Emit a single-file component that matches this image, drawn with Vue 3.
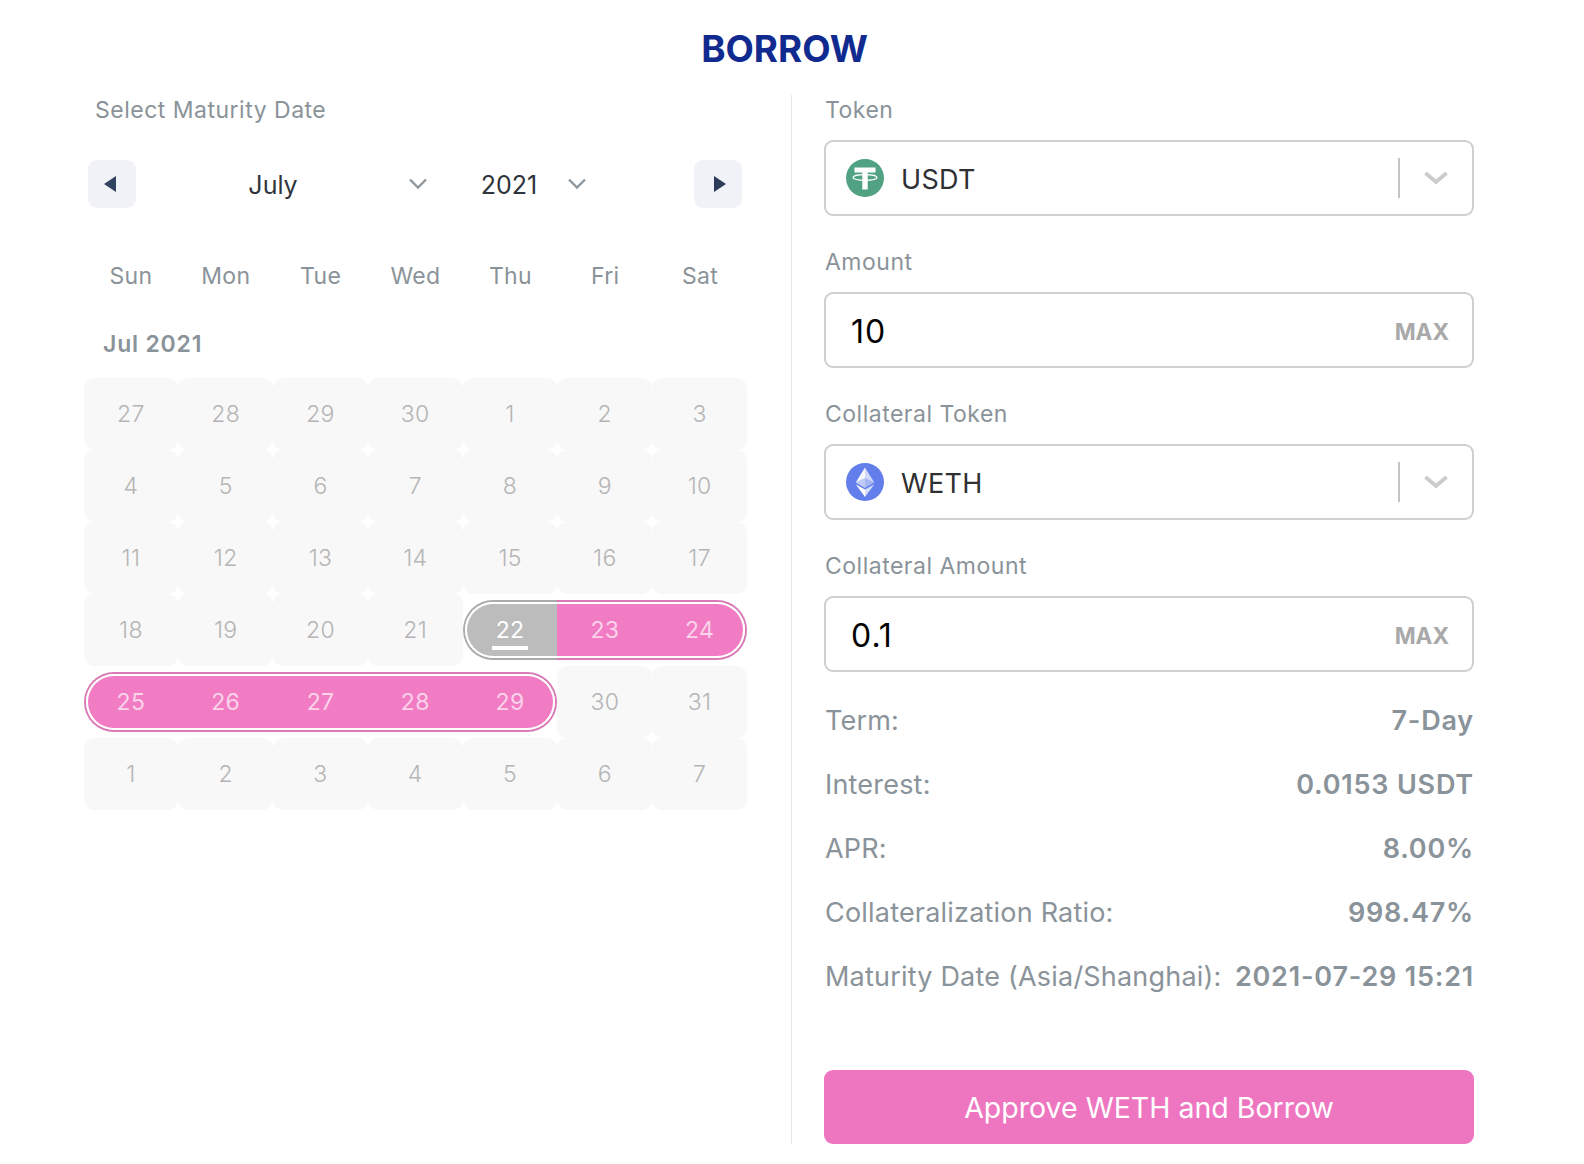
<script setup>
const days = ['Sun', 'Mon', 'Tue', 'Wed', 'Thu', 'Fri', 'Sat']
const nums = [27, 28, 29, 30, 1, 2, 3, 4, 5, 6, 7, 8, 9, 10, 11, 12, 13, 14, 15, 16, 17, 18, 19, 20, 21, 22, 23, 24, 25, 26, 27, 28, 29, 30, 31, 1, 2, 3, 4, 5, 6, 7]
const cells = nums.map((n, i) => ({
  n,
  sel: i >= 25 && i <= 32,
  today: i === 25,
  start: i === 25 || i === 28,
  end: i === 27 || i === 32
}))
const stats = [
  ['Term:', '7-Day'],
  ['Interest:', '0.0153 USDT'],
  ['APR:', '8.00%'],
  ['Collateralization Ratio:', '998.47%'],
  ['Maturity Date (Asia/Shanghai):', '2021-07-29 15:21']
]
</script>

<template>
  <div class="page">
    <h1 class="title">BORROW</h1>
    <main class="main">
      <section class="left">
        <div class="left-label">Select Maturity Date</div>
        <div class="nav">
          <button class="nav-btn"><svg class="tri-l" width="12" height="16" viewBox="0 0 12 16"><path d="M12 0v16L0 8z" fill="#2f4260" /></svg></button>
          <div class="month">
            <span class="month-text">July</span>
            <svg class="chev" width="24" height="14" viewBox="0 0 24 14"><path d="M4 2.5l8 8 8-8" fill="none" stroke="#8f979e" stroke-width="2.4" /></svg>
          </div>
          <div class="year">
            <span class="year-text">2021</span>
            <svg class="chev" width="24" height="14" viewBox="0 0 24 14"><path d="M4 2.5l8 8 8-8" fill="none" stroke="#8f979e" stroke-width="2.4" /></svg>
          </div>
          <button class="nav-btn next"><svg class="tri-r" width="12" height="16" viewBox="0 0 12 16"><path d="M0 0v16L12 8z" fill="#2b3a58" /></svg></button>
        </div>
        <div class="weekdays"><span v-for="d in days" :key="d">{{ d }}</span></div>
        <div class="caption">Jul 2021</div>
        <div class="grid">
          <div
            v-for="(c, i) in cells"
            :key="i"
            class="cell"
            :class="{ sel: c.sel, today: c.today, start: c.start, end: c.end }"
          >
            <span class="pill"><span class="fill"><span class="num">{{ c.n }}</span></span></span>
          </div>
        </div>
      </section>

      <section class="right">
        <div class="field">
          <label class="label">Token</label>
          <div class="box">
            <svg class="coin" width="38" height="38" viewBox="0 0 38 38">
              <circle cx="19" cy="19" r="19" fill="#50a283" />
              <path d="M8.5 8.5h21v5h-7.8v17h-5.4v-17H8.500z" fill="#fff" />
              <ellipse cx="19" cy="18.500" rx="12" ry="2.800" fill="none" stroke="#fff" stroke-width="1.200" />
            </svg>
            <span class="coin-name">USDT</span>
            <span class="sep"></span>
            <svg class="caret" width="26" height="16" viewBox="0 0 26 16"><path d="M2.500 3l10.500 9 10.500-9" fill="none" stroke="#cbcbcb" stroke-width="3.800" /></svg>
          </div>
        </div>
        <div class="field">
          <label class="label">Amount</label>
          <div class="box input"><span class="value">10</span><span class="max">MAX</span></div>
        </div>
        <div class="field">
          <label class="label">Collateral Token</label>
          <div class="box">
            <svg class="coin" width="38" height="38" viewBox="0 0 38 38">
              <circle cx="19" cy="19" r="19" fill="#627eea" />
              <path d="M19 4.500v10.700l-9.300 4.200z" fill="#fff" fill-opacity=".95" />
              <path d="M19 4.500l9.300 14.900-9.300-4.200z" fill="#fff" fill-opacity=".7" />
              <path d="M19 15.200l-9.300 4.200 9.300 5.500z" fill="#fff" fill-opacity=".6" />
              <path d="M19 15.200l9.300 4.200-9.300 5.500z" fill="#dfe4fb" fill-opacity=".55" />
              <path d="M9.700 21.200l9.300 12.800v-7.400z" fill="#fff" />
              <path d="M28.300 21.200L19 34v-7.400z" fill="#fff" fill-opacity=".75" />
            </svg>
            <span class="coin-name">WETH</span>
            <span class="sep"></span>
            <svg class="caret" width="26" height="16" viewBox="0 0 26 16"><path d="M2.500 3l10.500 9 10.500-9" fill="none" stroke="#cbcbcb" stroke-width="3.800" /></svg>
          </div>
        </div>
        <div class="field">
          <label class="label">Collateral Amount</label>
          <div class="box input"><span class="value">0.1</span><span class="max">MAX</span></div>
        </div>
        <div class="stats">
          <div v-for="s in stats" :key="s[0]" class="stat">
            <span class="stat-k">{{ s[0] }}</span>
            <span class="stat-v">{{ s[1] }}</span>
          </div>
        </div>
        <button class="cta">Approve WETH and Borrow</button>
      </section>
    </main>
  </div>
</template>

<style scoped>
.page {
  width: 1584px;
  height: 1164px;
  background: #fff;
  font-family: Inter, "Liberation Sans", sans-serif;
  overflow: hidden;
}
.title {
  margin: 0;
  height: 95px;
  line-height: 98px;
  padding-right: 15px;
  text-align: center;
  font-size: 36.800px;
  font-weight: 700;
  color: #112a8f;
}
.main {
  display: flex;
  height: 1049px;
}
.left {
  width: 792px;
  box-sizing: border-box;
  padding-left: 85px;
  flex: none;
  border-right: 1px solid #e6e6e6;
}
.left-label {
  height: 30px;
  line-height: 30px;
  padding-left: 10px;
  font-size: 23px;
  letter-spacing: 0.5px;
  color: #8a9399;
}
.nav {
  display: flex;
  align-items: center;
  height: 48px;
  margin-top: 35px;
  margin-left: 3px;
  width: 654px;
}
.nav-btn {
  width: 48px;
  height: 48px;
  border: 0;
  padding: 0;
  border-radius: 9px;
  background: #f1f2f7;
  display: flex;
  align-items: center;
  justify-content: center;
  flex: none;
}
.nav-btn.next { margin-left: auto; }
.tri-l { margin-right: 4px; }
.tri-r { margin-left: 4px; }
.month, .year {
  display: flex;
  align-items: center;
  font-size: 25px;
  color: #2f353b;
}
.month-text, .year-text { padding-top: 2px; }
.month { width: 290px; margin-left: 4px; }
.month-text { flex: 1; text-align: center; }
.year { margin-left: 40px; }
.year-text { width: 78px; text-align: center; margin-right: 17px; }
.chev { flex: none; }
.weekdays {
  display: grid;
  grid-template-columns: repeat(7, 1fr);
  width: 664px;
  margin-left: -1.500px;
  height: 30px;
  line-height: 30px;
  margin-top: 53px;
  text-align: center;
  font-size: 23px;
  letter-spacing: 0.3px;
  color: #8a9399;
}
.caption {
  height: 30px;
  line-height: 30px;
  margin-top: 38px;
  padding-left: 18px;
  font-size: 23px;
  font-weight: 600;
  letter-spacing: 0.8px;
  color: #8a9399;
}
.grid {
  display: grid;
  grid-template-columns: repeat(7, 1fr);
  grid-auto-rows: 72px;
  width: 663.500px;
  margin-left: -1.500px;
  margin-top: 19px;
}
.cell {
  background: #f8f8f8;
  border-radius: 10px;
  font-size: 23px;
  font-weight: 300;
  letter-spacing: 0.3px;
  color: #b5b5b5;
}
.pill, .fill {
  display: flex;
  height: 100%;
  width: 100%;
  box-sizing: border-box;
  align-items: center;
  justify-content: center;
}
.num { position: relative; }
.cell.sel {
  background: #fff;
  border-radius: 0;
  padding: 6px 0;
  box-sizing: border-box;
  color: #fbd3ea;
  font-weight: 400;
}
.sel .pill {
  border-top: 2px solid #d97ab6;
  border-bottom: 2px solid #d97ab6;
}
.sel .fill {
  background: #f17cc3;
  border-top: 2px solid #fff;
  border-bottom: 2px solid #fff;
}
.sel.start .pill {
  border-left: 2px solid #d97ab6;
  border-radius: 30px 0 0 30px;
}
.sel.start .fill {
  border-left: 2px solid #fff;
  border-radius: 28px 0 0 28px;
  padding-right: 4px;
}
.sel.end .pill {
  border-right: 2px solid #d97ab6;
  border-radius: 0 30px 30px 0;
}
.sel.end .fill {
  border-right: 2px solid #fff;
  border-radius: 0 28px 28px 0;
  padding-left: 4px;
}
.sel.today .pill { border-color: #ababab; }
.sel.today .fill { background: #bcbcbc; }
.today { color: #fff !important; }
.today .num::after {
  content: "";
  position: absolute;
  left: -4px;
  right: -4px;
  bottom: -6px;
  height: 4px;
  background: #fff;
}
.right {
  width: 650px;
  margin-left: 32px;
  flex: none;
  display: flex;
  flex-direction: column;
}
.field { margin-bottom: 31px; }
.label {
  display: block;
  height: 30px;
  line-height: 30px;
  margin-bottom: 15px;
  padding-left: 1px;
  font-size: 23px;
  letter-spacing: 0.5px;
  color: #8a9399;
}
.box {
  display: flex;
  align-items: center;
  height: 76px;
  box-sizing: border-box;
  border: 2px solid #cfcfcf;
  border-radius: 9px;
  padding: 0 23px 0 20px;
}
.input { padding-left: 25px; }
.coin { flex: none; }
.coin-name {
  margin-left: 17px;
  padding-top: 2px;
  font-size: 27px;
  letter-spacing: 0.3px;
  color: #2f3033;
  flex: 1;
}
.sep {
  width: 2px;
  height: 40px;
  background: #c4c4c4;
  margin-right: 23px;
}
.caret { flex: none; }
.value {
  flex: 1;
  padding-top: 2px;
  font-size: 32px;
  letter-spacing: 1px;
  color: #000;
}
.max {
  font-size: 22.500px;
  font-weight: 700;
  padding-top: 2px;
  color: #a9a9a9;
}
.stats {
  display: flex;
  flex-direction: column;
  gap: 24px;
  margin-top: -2px;
}
.stat {
  display: flex;
  justify-content: space-between;
  height: 40px;
  line-height: 40px;
  padding-left: 1px;
  font-size: 27px;
  letter-spacing: 0.2px;
  color: #8a9399;
  white-space: nowrap;
}
.stat-v { font-weight: 600; letter-spacing: 0.8px; }
.cta {
  margin-top: auto;
  height: 74px;
  border: 0;
  border-radius: 9px;
  background: #ee76c1;
  color: #fff;
  font-family: inherit;
  font-size: 28.500px;
  flex: none;
}
</style>
